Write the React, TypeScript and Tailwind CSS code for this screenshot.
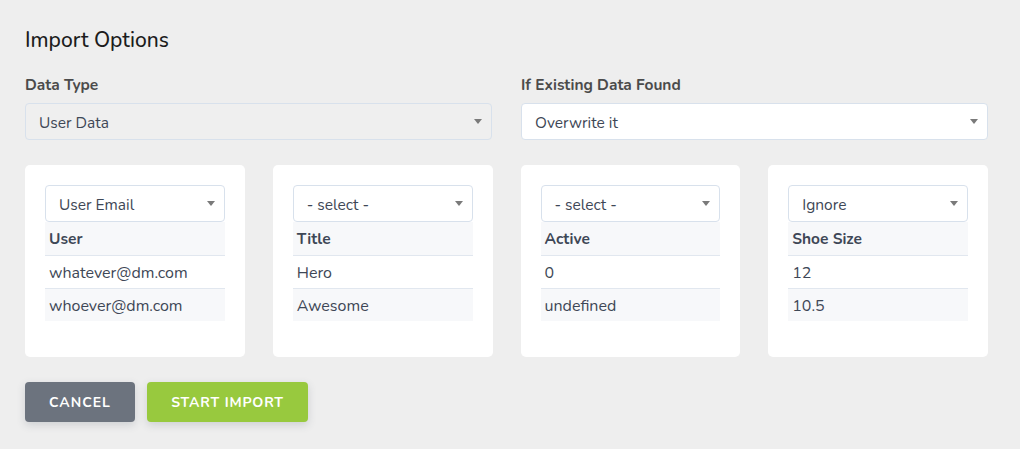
import React from 'react'

type Column = {
  choice: string
  title: string
  rows: string[]
}

const columns: Column[] = [
  { choice: 'User Email', title: 'User', rows: ['whatever@dm.com', 'whoever@dm.com'] },
  { choice: '- select -', title: 'Title', rows: ['Hero', 'Awesome'] },
  { choice: '- select -', title: 'Active', rows: ['0', 'undefined'] },
  { choice: 'Ignore', title: 'Shoe Size', rows: ['12', '10.5'] },
]

function Caret() {
  return (
    <svg width="8" height="5" viewBox="0 0 8 5" className="shrink-0">
      <path d="M0 0h8L4 5z" fill="#7a7a7a" />
    </svg>
  )
}

function SelectBox({ value, muted, className = '' }: { value: string; muted?: boolean; className?: string }) {
  return (
    <div
      className={`flex h-[37px] items-center justify-between rounded-[4px] border border-[#d8e1ec] pl-[13px] pr-[9px] text-[15.5px] text-[#3e4756] ${
        muted ? 'bg-[#efefef]' : 'bg-white'
      } ${className}`}
    >
      <span className="pt-[2px]">{value}</span>
      <Caret />
    </div>
  )
}

export default function App() {
  return (
    <div className="min-h-[449px] bg-[#eeeeee] pl-[25px] pr-[32px] pt-[27px] font-['Nunito','Open_Sans',sans-serif]">
      <h2 className="text-[21px] font-medium leading-[26px] text-[#1c1c1c]">Import Options</h2>

      <div className="mt-[22px] grid grid-cols-2 gap-[29px]">
        <div>
          <label className="block text-[15.5px] font-bold leading-[20px] text-[#4b4b4b]">Data Type</label>
          <SelectBox value="User Data" muted className="mt-[8px]" />
        </div>
        <div>
          <label className="block text-[15.5px] font-bold leading-[20px] text-[#4b4b4b]">If Existing Data Found</label>
          <SelectBox value="Overwrite it" className="mt-[8px]" />
        </div>
      </div>

      <div className="mt-[25px] grid grid-cols-4 gap-[28px]">
        {columns.map((col, i) => (
          <div key={i} className="h-[192px] rounded-[5px] bg-white px-[20px] pt-[20px]">
            <SelectBox value={col.choice} />
            <div className="text-[16px] text-[#3e4756]">
              <div className="flex h-[34px] items-center border-b border-[#e1e7ef] bg-[#f7f8fa] px-[4px] pt-[1px] text-[15.5px] font-bold">
                {col.title}
              </div>
              <div className="flex h-[33px] items-center border-b border-[#e1e7ef] px-[4px] pt-[2px]">{col.rows[0]}</div>
              <div className="flex h-[32px] items-center bg-[#f7f8fa] px-[4px] pt-[2px]">{col.rows[1]}</div>
            </div>
          </div>
        ))}
      </div>

      <div className="mt-[25px] flex gap-[12px]">
        <button className="h-[40px] w-[110px] rounded-[4px] bg-[#6c737e] text-[14px] font-bold uppercase tracking-[0.07em] text-white shadow-[0_3px_8px_rgba(60,70,90,0.18)]">
          Cancel
        </button>
        <button className="h-[40px] w-[161px] rounded-[4px] bg-[#98c93e] text-[14px] font-bold uppercase tracking-[0.06em] text-white shadow-[0_3px_8px_rgba(60,70,90,0.18)]">
          Start Import
        </button>
      </div>
    </div>
  )
}
